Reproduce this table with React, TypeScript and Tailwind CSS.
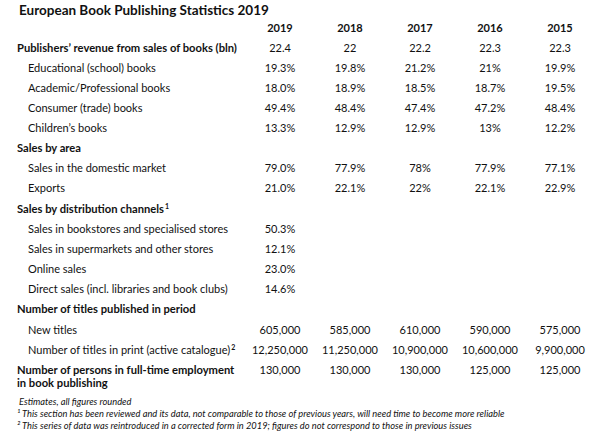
type Row = {
  label: string;
  sup?: string;
  values?: string[];
  section?: boolean;
  extraTop?: boolean;
};

const years = ['2019', '2018', '2017', '2016', '2015'];

const rows: Row[] = [
  { label: 'Publishers’ revenue from sales of books (bln)', section: true, values: ['22.4', '22', '22.2', '22.3', '22.3'] },
  { label: 'Educational (school) books', values: ['19.3%', '19.8%', '21.2%', '21%', '19.9%'] },
  { label: 'Academic/Professional books', values: ['18.0%', '18.9%', '18.5%', '18.7%', '19.5%'] },
  { label: 'Consumer (trade) books', values: ['49.4%', '48.4%', '47.4%', '47.2%', '48.4%'] },
  { label: 'Children’s books', values: ['13.3%', '12.9%', '12.9%', '13%', '12.2%'] },
  { label: 'Sales by area', section: true },
  { label: 'Sales in the domestic market', values: ['79.0%', '77.9%', '78%', '77.9%', '77.1%'] },
  { label: 'Exports', values: ['21.0%', '22.1%', '22%', '22.1%', '22.9%'] },
  { label: 'Sales by distribution channels', sup: '1', section: true, extraTop: true },
  { label: 'Sales in bookstores and specialised stores', values: ['50.3%'] },
  { label: 'Sales in supermarkets and other stores', values: ['12.1%'] },
  { label: 'Online sales', values: ['23.0%'] },
  { label: 'Direct sales (incl. libraries and book clubs)', values: ['14.6%'] },
  { label: 'Number of titles published in period', section: true },
  { label: 'New titles', values: ['605,000', '585,000', '610,000', '590,000', '575,000'], extraTop: true },
  { label: 'Number of titles in print (active catalogue)', sup: '2', values: ['12,250,000', '11,250,000', '10,900,000', '10,600,000', '9,900,000'] },
];

const grid = 'grid grid-cols-[228px_repeat(5,70px)]';

function DataRow({ row }: { row: Row }) {
  return (
    <div className={`${grid} h-5 items-center ${row.extraTop ? 'mt-px' : ''}`}>
      <div className={row.section ? 'font-bold text-[11.2px] whitespace-nowrap' : 'pl-[11px] whitespace-nowrap'}>
        {row.label}
        {row.sup && <sup className="text-[7px] font-bold -top-[4px] ml-px">{row.sup}</sup>}
      </div>
      {(row.values ?? []).map((v, i) => (
        <div key={i} className="text-center">{v}</div>
      ))}
    </div>
  );
}

export default function App() {
  return (
    <div className="w-[600px] h-[436px] bg-white text-[#111] font-['Lato',sans-serif] text-[11px] leading-5 overflow-hidden">
      <div className="pl-[19px] pt-[2px] h-[18px] leading-[16px] font-bold text-[13.5px]">
        European Book Publishing Statistics 2019
      </div>
      <div className="pl-[17px]">
        <div className={`${grid} h-5 items-center font-bold`}>
          <div />
          {years.map((y) => (
            <div key={y} className="text-center">{y}</div>
          ))}
        </div>
        {rows.map((r) => (
          <DataRow key={r.label} row={r} />
        ))}
        <div className={`${grid} py-[3px] leading-[13px] items-start`}>
          <div className="font-bold text-[11.2px]">
            Number of persons in full-time employment in book publishing
          </div>
          {['130,000', '130,000', '130,000', '125,000', '125,000'].map((v, i) => (
            <div key={i} className="text-center">{v}</div>
          ))}
        </div>
        <div className="mt-[4px] italic text-[9.3px] leading-[12px]">
          <div className="pl-[2px]">Estimates, all figures rounded</div>
          <div>¹ This section has been reviewed and its data, not comparable to those of previous years, will need time to become more reliable</div>
          <div>² This series of data was reintroduced in a corrected form in 2019; figures do not correspond to those in previous issues</div>
        </div>
      </div>
    </div>
  );
}
